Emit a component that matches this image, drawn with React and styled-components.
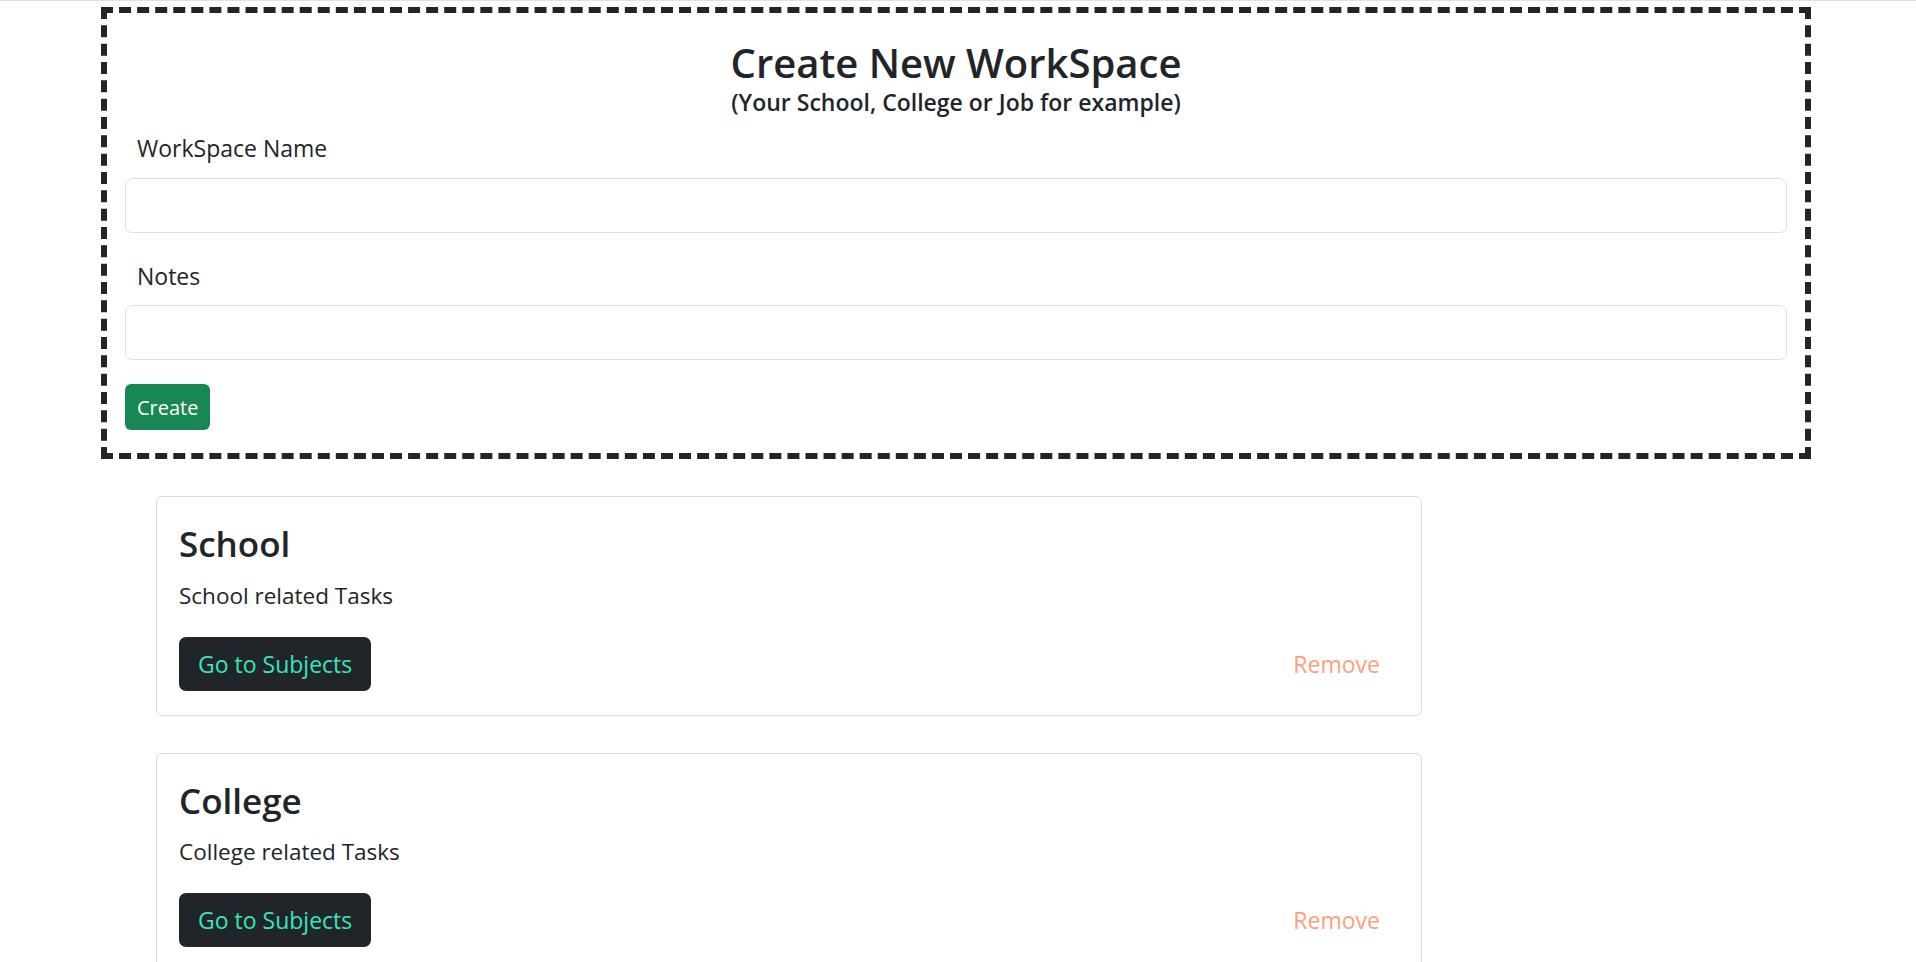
import React from "react";
import styled, { createGlobalStyle } from "styled-components";

const GlobalStyle = createGlobalStyle`
  body {
    margin: 0;
    background: #fff;
    color: #212529;
    font-family: "Open Sans", "Noto Sans", sans-serif;
  }
  * {
    box-sizing: border-box;
  }
`;

const TopRule = styled.div`
  height: 1px;
  background-color: #dee2e6;
`;

const PageBody = styled.div`
  padding: 6px 0 40px 0;
`;

const FormBox = styled.form`
  width: 1710px;
  margin-left: 101px;
  border: 6px dashed #212529;
  padding: 0 18px 23px 18px;
`;

const Heading = styled.h1`
  margin: 26px 0 0 0;
  text-align: center;
  font-size: 40px;
  font-weight: 600;
  line-height: 1.2;
`;

const SubHeading = styled.h5`
  margin: 2px 0 0 0;
  text-align: center;
  font-size: 23px;
  font-weight: 600;
  line-height: 1.15;
`;

const FieldLabel = styled.label`
  display: block;
  margin: ${(props) => props.top}px 0 12px 0;
  padding-left: 12px;
  font-size: 23px;
  line-height: 1.5;
`;

const TextField = styled.input`
  display: block;
  width: 100%;
  height: 55px;
  border: 1px solid #dee2e6;
  border-radius: 7px;
  padding: 0 16px;
  font-size: 22px;
  font-family: inherit;
  outline: none;
`;

const CreateButton = styled.button`
  display: inline-flex;
  align-items: center;
  justify-content: center;
  margin-top: 24px;
  height: 46px;
  padding: 0 12px;
  border: none;
  border-radius: 6px;
  background-color: #198754;
  color: #fff;
  font-family: inherit;
  font-size: 20px;
`;

const CardList = styled.div`
  width: 1266px;
  margin-left: 156px;
`;

const Card = styled.div`
  margin-top: 37px;
  border: 1px solid #dcdcdc;
  border-radius: 6px;
  padding: 24px 22px 24px 22px;
`;

const CardTitle = styled.h3`
  margin: 0 0 12px 0;
  font-size: 35px;
  font-weight: 600;
  line-height: 1.3;
`;

const CardText = styled.p`
  margin: 0 0 24px 0;
  font-size: 22.5px;
  line-height: 1.5;
`;

const ActionRow = styled.div`
  display: flex;
  justify-content: space-between;
  align-items: center;
`;

const ActionButton = styled.button`
  display: inline-flex;
  align-items: center;
  height: 54px;
  padding: 0 19px;
  border: none;
  border-radius: 7px;
  background-color: ${(props) => (props.dark ? "#212529" : "transparent")};
  color: ${(props) => (props.dark ? "#36e6bb" : "#ffa07a")};
  font-family: inherit;
  font-size: 23px;
`;

const workspaces = [
  { name: "School", notes: "School related Tasks" },
  { name: "College", notes: "College related Tasks" },
];

export default function App() {
  return (
    <>
      <GlobalStyle />
      <TopRule />
      <PageBody>
        <FormBox onSubmit={(e) => e.preventDefault()}>
          <Heading>Create New WorkSpace</Heading>
          <SubHeading>(Your School, College or Job for example)</SubHeading>
          <FieldLabel top={16}>WorkSpace Name</FieldLabel>
          <TextField type="text" />
          <FieldLabel top={26}>Notes</FieldLabel>
          <TextField type="text" />
          <CreateButton type="submit">Create</CreateButton>
        </FormBox>
        <CardList>
          {workspaces.map((w) => (
            <Card key={w.name}>
              <CardTitle>{w.name}</CardTitle>
              <CardText>{w.notes}</CardText>
              <ActionRow>
                <ActionButton dark>Go to Subjects</ActionButton>
                <ActionButton>Remove</ActionButton>
              </ActionRow>
            </Card>
          ))}
        </CardList>
      </PageBody>
    </>
  );
}
